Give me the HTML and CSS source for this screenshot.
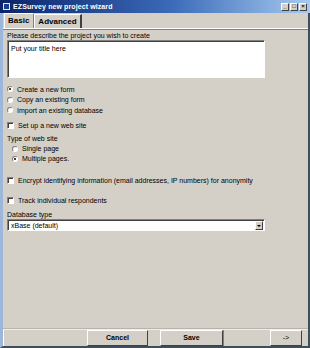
FILE: index.html
```html
<!DOCTYPE html>
<html lang="en">
<head>
  <meta charset="UTF-8" />
  <title>EZSurvey new project wizard</title>
  <link rel="stylesheet" href="styles.css">
</head>
<body>

  <!-- Window frame -->
  <div class="window">

    <!-- Title bar -->
    <div class="titlebar">
      <span class="app-icon"></span>
      <span class="title">EZSurvey new project wizard</span>
      <div class="win-buttons">
        <span class="win-btn">_</span>
        <span class="win-btn">&#9633;</span>
        <span class="win-btn">&times;</span>
      </div>
    </div>

    <!-- Tabs -->
    <div class="tabs">
      <span class="tab active">Basic</span>
      <span class="tab">Advanced</span>
    </div>

    <!-- Form content -->
    <div class="content">
      <div class="label">Please describe the project you wish to create</div>
      <div class="textbox">Put your title here</div>

      <div class="group first">
        <div class="opt"><span class="radio checked"></span>Create a new form</div>
        <div class="opt"><span class="radio"></span>Copy an existing form</div>
        <div class="opt"><span class="radio"></span>Import an existing database</div>
      </div>

      <div class="opt check-web"><span class="check"></span>Set up a new web site</div>

      <div class="label type-label">Type of web site</div>
      <div class="group indent">
        <div class="opt"><span class="radio"></span>Single page</div>
        <div class="opt"><span class="radio checked"></span>Multiple pages.</div>
      </div>

      <div class="opt check-encrypt"><span class="check"></span>Encrypt identifying information (email addresses, IP numbers) for anonymity</div>
      <div class="opt check-track"><span class="check"></span>Track individual respondents</div>

      <div class="label db-label">Database type</div>
      <div class="select">
        <span>xBase (default)</span>
        <span class="drop"></span>
      </div>
    </div>

    <!-- Bottom button bar -->
    <div class="bottombar">
      <span class="cell spacer-left"></span>
      <span class="cell btn cancel">Cancel</span>
      <span class="cell gap"></span>
      <span class="cell btn save">Save</span>
      <span class="cell spacer-mid"></span>
      <span class="cell btn next">-&gt;</span>
      <span class="cell spacer-right"></span>
    </div>
  </div>

</body>
</html>
```

FILE: styles.css
```css
/* Page reset */
body {
  margin: 0;
  font-family: 'Liberation Sans', Arial, sans-serif;
  font-size: 7px;
  color: #000;
  background: #d4d0c8;
}

/* Whole dialog window */
.window {
  width: 310px;
  height: 348px;
  box-sizing: border-box;
  background: #d4d0c8;
  border-left: 3px solid #9db6dc;
  border-right: 2px solid #3e4e5a;
  border-bottom: 2px solid #3e4e5a;
  display: flex;
  flex-direction: column;
}

/* Title bar with classic blue gradient */
.titlebar {
  height: 13px;
  margin-left: -3px;
  margin-right: -2px;
  padding: 0 3px;
  background: linear-gradient(to right, #0a246a, #3b6ab8 55%, #a6caf0);
  display: flex;
  align-items: center;
  gap: 3px;
}

.app-icon {
  width: 7px;
  height: 7px;
  background: #1a3c8c;
  border: 1px solid #dfe8f8;
  box-sizing: border-box;
}

.title {
  color: #fff;
  font-weight: bold;
  font-size: 7px;
  letter-spacing: 0.1px;
}

.win-buttons {
  margin-left: auto;
  display: flex;
  gap: 1px;
}

.win-btn {
  width: 8px;
  height: 8px;
  box-sizing: border-box;
  background: #d4d0c8;
  border: 1px solid;
  border-color: #fff #404040 #404040 #fff;
  font-size: 6px;
  line-height: 5px;
  text-align: center;
  font-weight: bold;
}

/* Tab strip */
.tabs {
  height: 15px;
  display: flex;
  align-items: flex-end;
  padding-left: 1px;
  border-bottom: 1px solid #fff;
  box-shadow: 0 1px 0 #808080;
}

.tab {
  font-size: 8px;
  font-weight: bold;
  padding: 0 3px;
  height: 13px;
  line-height: 13px;
  border-left: 1px solid #fff;
  border-top: 1px solid #fff;
  border-right: 2px solid #404040;
}

.tab.active {
  height: 14px;
  border-right: 1px solid #808080;
  padding: 0 4px 0 3px;
}

/* Main form area */
.content {
  flex: 1;
  padding: 2px 0 0 4px;
  display: flex;
  flex-direction: column;
}

.label {
  height: 9px;
  line-height: 9px;
}

.textbox {
  width: 258px;
  height: 38px;
  box-sizing: border-box;
  background: #fff;
  border: 1px solid;
  border-color: #808080 #fff #fff #808080;
  box-shadow: inset 1px 1px 0 #404040;
  padding: 3px 3px;
  line-height: 9px;
}

.group.first {
  margin-top: 6px;
}

.opt {
  height: 10.5px;
  display: flex;
  align-items: center;
  gap: 4px;
}

.indent {
  padding-left: 5px;
}

.indent .opt {
  height: 10px;
}

/* Radio buttons */
.radio {
  width: 6px;
  height: 6px;
  box-sizing: border-box;
  border-radius: 50%;
  background: #fff;
  border: 1px solid;
  border-color: #808080 #fff #fff #808080;
  position: relative;
}

.radio.checked::after {
  content: '';
  position: absolute;
  left: 1px;
  top: 1px;
  width: 2px;
  height: 2px;
  border-radius: 50%;
  background: #000;
}

/* Check boxes */
.check {
  width: 7px;
  height: 7px;
  box-sizing: border-box;
  background: #fff;
  border: 1px solid;
  border-color: #808080 #fff #fff #808080;
  box-shadow: inset 1px 1px 0 #404040;
}

.check-web {
  margin-top: 4.5px;
}

.type-label {
  margin-top: 3px;
  height: 10px;
  line-height: 10px;
}

.check-encrypt {
  margin-top: 12px;
}

.check-track {
  margin-top: 9.5px;
}

.db-label {
  margin-top: 4px;
}

/* Database dropdown */
.select {
  width: 258px;
  height: 12px;
  box-sizing: border-box;
  background: #fff;
  border: 1px solid;
  border-color: #808080 #fff #fff #808080;
  box-shadow: inset 1px 1px 0 #404040;
  display: flex;
  align-items: center;
  padding: 0 1px 0 3px;
}

.drop {
  margin-left: auto;
  width: 8px;
  height: 9px;
  box-sizing: border-box;
  background: #d4d0c8;
  border: 1px solid;
  border-color: #fff #404040 #404040 #fff;
  position: relative;
}

.drop::after {
  content: '';
  position: absolute;
  left: 1px;
  top: 3px;
  border-left: 2px solid transparent;
  border-right: 2px solid transparent;
  border-top: 2px solid #000;
}

/* Bottom buttons */
.bottombar {
  height: 17px;
  display: flex;
  border-top: 1px solid #b8b4ac;
  box-shadow: inset 0 1px 0 #f0eee8;
}

.cell {
  height: 16px;
  box-sizing: border-box;
  margin-top: 1px;
}

.btn {
  border: 1px solid;
  border-color: #fff #404040 #404040 #fff;
  font-weight: bold;
  text-align: center;
  line-height: 14px;
  font-size: 7px;
}

.spacer-left {
  width: 84px;
  border-left: 1px solid #fff;
}

.cancel {
  width: 61px;
}

.gap {
  width: 12px;
}

.save {
  width: 63px;
}

.spacer-mid {
  width: 47px;
  border-left: 1px solid #808080;
}

.next {
  width: 32px;
  font-weight: normal;
}

.spacer-right {
  flex: 1;
}
```
